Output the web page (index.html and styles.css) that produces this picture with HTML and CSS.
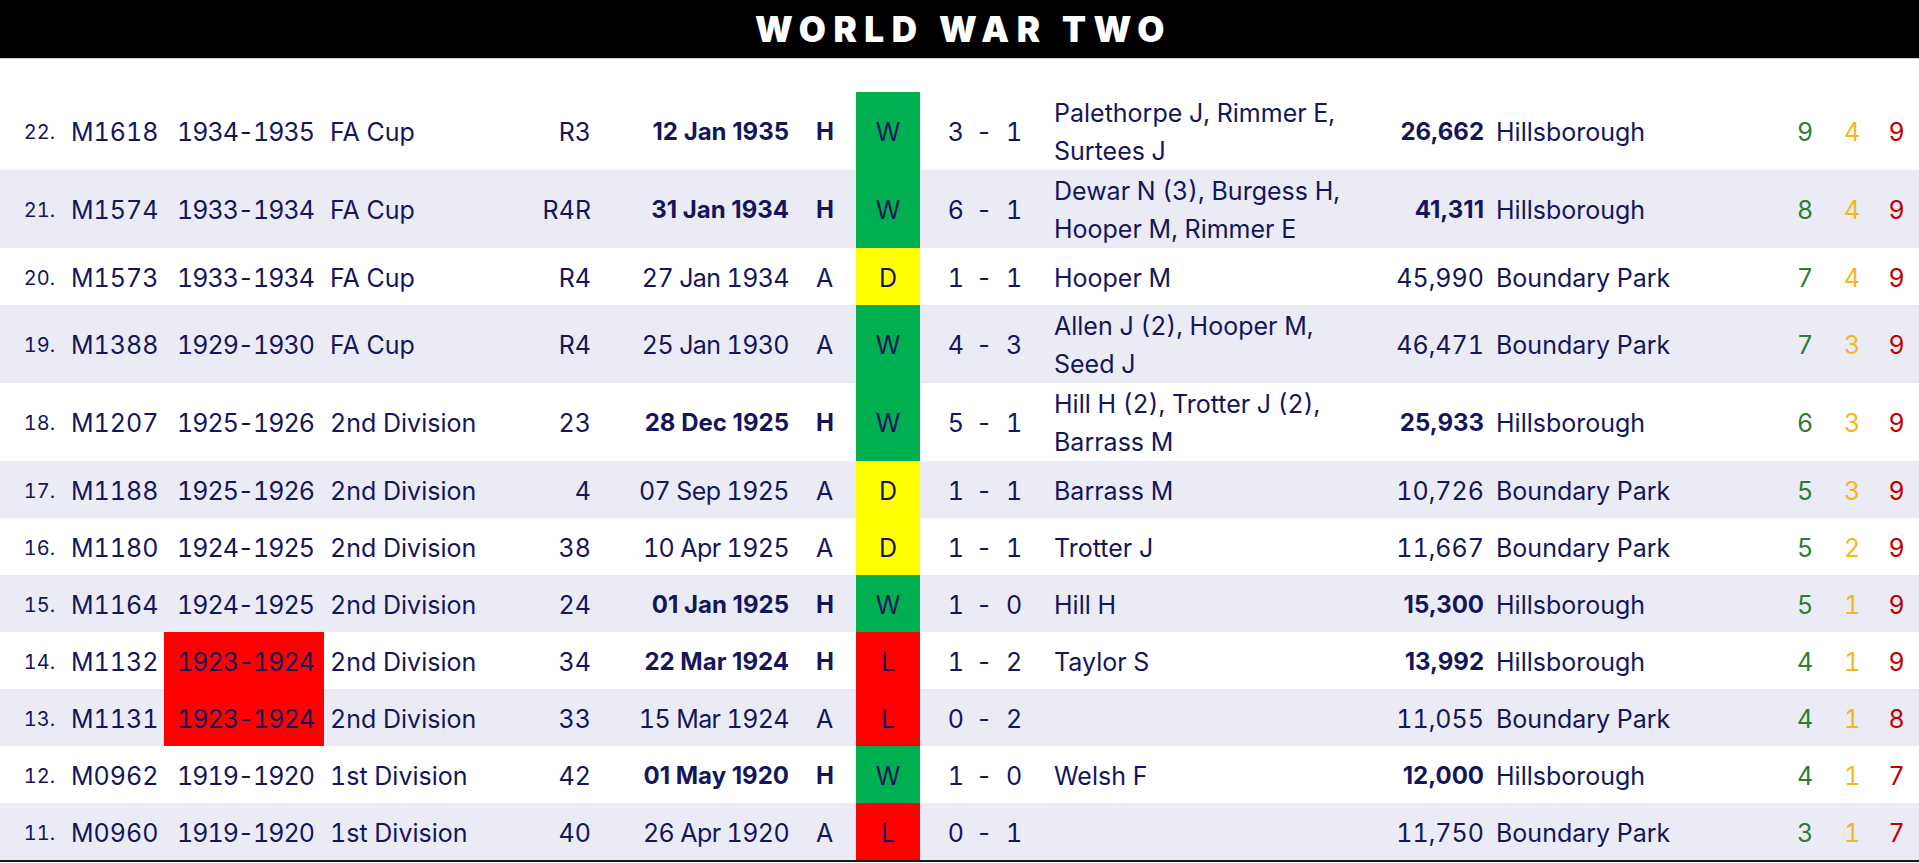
FILE: index.html
```html
<!DOCTYPE html>
<html lang="en">
<head>
<meta charset="utf-8">
<title>World War Two</title>
<link rel="stylesheet" href="styles.css">
</head>
<body>
<header class="banner"><h1 class="banner-title">WORLD WAR TWO</h1></header>
<main class="table">
  <div class="row double">
    <div class="c idx">22.</div><div class="c code">M1618</div><div class="c season">1934-1935</div><div class="c comp">FA Cup</div><div class="c rnd">R3</div><div class="c date b">12 Jan 1935</div><div class="c ha b">H</div><div class="c res win">W</div><div class="c score"><span class="gh">3</span><span class="dash">-</span><span class="ga">1</span></div><div class="c scorers">Palethorpe J, Rimmer E,<br>Surtees J</div><div class="c att b">26,662</div><div class="c ground">Hillsborough</div><div class="c n w">9</div><div class="c n d">4</div><div class="c n l">9</div>
  </div>
  <div class="row double alt">
    <div class="c idx">21.</div><div class="c code">M1574</div><div class="c season">1933-1934</div><div class="c comp">FA Cup</div><div class="c rnd">R4R</div><div class="c date b">31 Jan 1934</div><div class="c ha b">H</div><div class="c res win">W</div><div class="c score"><span class="gh">6</span><span class="dash">-</span><span class="ga">1</span></div><div class="c scorers">Dewar N (3), Burgess H,<br>Hooper M, Rimmer E</div><div class="c att b">41,311</div><div class="c ground">Hillsborough</div><div class="c n w">8</div><div class="c n d">4</div><div class="c n l">9</div>
  </div>
  <div class="row">
    <div class="c idx">20.</div><div class="c code">M1573</div><div class="c season">1933-1934</div><div class="c comp">FA Cup</div><div class="c rnd">R4</div><div class="c date">27 Jan 1934</div><div class="c ha">A</div><div class="c res draw">D</div><div class="c score"><span class="gh">1</span><span class="dash">-</span><span class="ga">1</span></div><div class="c scorers">Hooper M</div><div class="c att">45,990</div><div class="c ground">Boundary Park</div><div class="c n w">7</div><div class="c n d">4</div><div class="c n l">9</div>
  </div>
  <div class="row double alt">
    <div class="c idx">19.</div><div class="c code">M1388</div><div class="c season">1929-1930</div><div class="c comp">FA Cup</div><div class="c rnd">R4</div><div class="c date">25 Jan 1930</div><div class="c ha">A</div><div class="c res win">W</div><div class="c score"><span class="gh">4</span><span class="dash">-</span><span class="ga">3</span></div><div class="c scorers">Allen J (2), Hooper M,<br>Seed J</div><div class="c att">46,471</div><div class="c ground">Boundary Park</div><div class="c n w">7</div><div class="c n d">3</div><div class="c n l">9</div>
  </div>
  <div class="row double">
    <div class="c idx">18.</div><div class="c code">M1207</div><div class="c season">1925-1926</div><div class="c comp">2nd Division</div><div class="c rnd">23</div><div class="c date b">28 Dec 1925</div><div class="c ha b">H</div><div class="c res win">W</div><div class="c score"><span class="gh">5</span><span class="dash">-</span><span class="ga">1</span></div><div class="c scorers">Hill H (2), Trotter J (2),<br>Barrass M</div><div class="c att b">25,933</div><div class="c ground">Hillsborough</div><div class="c n w">6</div><div class="c n d">3</div><div class="c n l">9</div>
  </div>
  <div class="row alt">
    <div class="c idx">17.</div><div class="c code">M1188</div><div class="c season">1925-1926</div><div class="c comp">2nd Division</div><div class="c rnd">4</div><div class="c date">07 Sep 1925</div><div class="c ha">A</div><div class="c res draw">D</div><div class="c score"><span class="gh">1</span><span class="dash">-</span><span class="ga">1</span></div><div class="c scorers">Barrass M</div><div class="c att">10,726</div><div class="c ground">Boundary Park</div><div class="c n w">5</div><div class="c n d">3</div><div class="c n l">9</div>
  </div>
  <div class="row">
    <div class="c idx">16.</div><div class="c code">M1180</div><div class="c season">1924-1925</div><div class="c comp">2nd Division</div><div class="c rnd">38</div><div class="c date">10 Apr 1925</div><div class="c ha">A</div><div class="c res draw">D</div><div class="c score"><span class="gh">1</span><span class="dash">-</span><span class="ga">1</span></div><div class="c scorers">Trotter J</div><div class="c att">11,667</div><div class="c ground">Boundary Park</div><div class="c n w">5</div><div class="c n d">2</div><div class="c n l">9</div>
  </div>
  <div class="row alt">
    <div class="c idx">15.</div><div class="c code">M1164</div><div class="c season">1924-1925</div><div class="c comp">2nd Division</div><div class="c rnd">24</div><div class="c date b">01 Jan 1925</div><div class="c ha b">H</div><div class="c res win">W</div><div class="c score"><span class="gh">1</span><span class="dash">-</span><span class="ga">0</span></div><div class="c scorers">Hill H</div><div class="c att b">15,300</div><div class="c ground">Hillsborough</div><div class="c n w">5</div><div class="c n d">1</div><div class="c n l">9</div>
  </div>
  <div class="row">
    <div class="c idx">14.</div><div class="c code">M1132</div><div class="c season flag">1923-1924</div><div class="c comp">2nd Division</div><div class="c rnd">34</div><div class="c date b">22 Mar 1924</div><div class="c ha b">H</div><div class="c res loss">L</div><div class="c score"><span class="gh">1</span><span class="dash">-</span><span class="ga">2</span></div><div class="c scorers">Taylor S</div><div class="c att b">13,992</div><div class="c ground">Hillsborough</div><div class="c n w">4</div><div class="c n d">1</div><div class="c n l">9</div>
  </div>
  <div class="row alt">
    <div class="c idx">13.</div><div class="c code">M1131</div><div class="c season flag">1923-1924</div><div class="c comp">2nd Division</div><div class="c rnd">33</div><div class="c date">15 Mar 1924</div><div class="c ha">A</div><div class="c res loss">L</div><div class="c score"><span class="gh">0</span><span class="dash">-</span><span class="ga">2</span></div><div class="c scorers"></div><div class="c att">11,055</div><div class="c ground">Boundary Park</div><div class="c n w">4</div><div class="c n d">1</div><div class="c n l">8</div>
  </div>
  <div class="row">
    <div class="c idx">12.</div><div class="c code">M0962</div><div class="c season">1919-1920</div><div class="c comp">1st Division</div><div class="c rnd">42</div><div class="c date b">01 May 1920</div><div class="c ha b">H</div><div class="c res win">W</div><div class="c score"><span class="gh">1</span><span class="dash">-</span><span class="ga">0</span></div><div class="c scorers">Welsh F</div><div class="c att b">12,000</div><div class="c ground">Hillsborough</div><div class="c n w">4</div><div class="c n d">1</div><div class="c n l">7</div>
  </div>
  <div class="row alt last">
    <div class="c idx">11.</div><div class="c code">M0960</div><div class="c season">1919-1920</div><div class="c comp">1st Division</div><div class="c rnd">40</div><div class="c date">26 Apr 1920</div><div class="c ha">A</div><div class="c res loss">L</div><div class="c score"><span class="gh">0</span><span class="dash">-</span><span class="ga">1</span></div><div class="c scorers"></div><div class="c att">11,750</div><div class="c ground">Boundary Park</div><div class="c n w">3</div><div class="c n d">1</div><div class="c n l">7</div>
  </div>
</main>
</body>
</html>
```

FILE: styles.css
```css
* { box-sizing: border-box; }

html, body {
  margin: 0;
  padding: 0;
  background: #ffffff;
}

body {
  width: 1919px;
  font-family: Inter, "Liberation Sans", sans-serif;
  color: #15165a;
}

.banner {
  height: 59px;
  background: #000000;
  border-bottom: 1px solid #c8c8c8;
  display: flex;
  align-items: center;
  justify-content: center;
}

.banner-title {
  margin: 0;
  padding-left: 8px;
  color: #ffffff;
  font-family: Inter, "Liberation Sans", sans-serif;
  font-weight: 900;
  font-size: 35px;
  letter-spacing: 7.5px;
  line-height: 1;
}

.table {
  margin-top: 33px;
  border-bottom: 2px solid #1c1c1c;
}

.row {
  display: grid;
  grid-template-columns: 62px 102px 160px 176px 100px 200px 56px 64px 120px 350px 100px 290px 50px 44px 45px;
  min-height: 57px;
  background: #ffffff;
  font-size: 25px;
  line-height: 38px;
  font-variant-numeric: tabular-nums;
}

.row.double {
  min-height: 78px;
}

.row.alt {
  background: #ebebf5;
}

.c {
  display: flex;
  align-items: center;
  padding-top: 2px;
  white-space: nowrap;
}

.b {
  font-weight: 700;
  font-size: 24px;
  font-variant-numeric: normal;
}

.idx {
  justify-content: flex-end;
  padding-right: 7px;
  font-size: 20px;
}

.code { padding-left: 9px; }

.season {
  padding-left: 13px;
  letter-spacing: -1px;
}
.season.flag { background: #ff0000; }

.comp { padding-left: 6px; }

.rnd {
  justify-content: flex-end;
  padding-right: 9px;
}

.date {
  justify-content: flex-end;
  padding-right: 11px;
  letter-spacing: -0.6px;
}
.date.b { letter-spacing: 0; }

.ha { padding-left: 16px; }

.res {
  justify-content: center;
}
.res.win { background: #00b050; }
.res.draw { background: #ffff00; }
.res.loss { background: #ff0000; }

.score .gh {
  width: 44px;
  text-align: right;
}
.score .dash {
  width: 40px;
  text-align: center;
}
.score .ga {
  padding-left: 2px;
}

.scorers {
  padding-left: 14px;
  white-space: normal;
}

.att {
  justify-content: flex-end;
  padding-right: 6px;
}

.ground { padding-left: 6px; }

.n { justify-content: center; }
.n.w { color: #2e7d32; }
.n.d { color: #f2b81c; }
.n.l { color: #c00000; }
```
